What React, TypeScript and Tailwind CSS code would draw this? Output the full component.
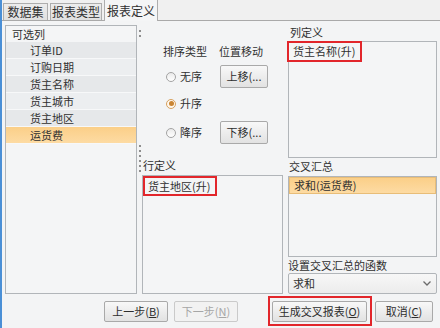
import React from 'react';

const fields = ['订单ID', '订购日期', '货主名称', '货主城市', '货主地区', '运货费'];

const Radio = ({ label, checked }: { label: string; checked?: boolean }) => (
  <div className="flex items-center gap-[4px] pl-[3px]">
    {checked ? (
      <span className="flex h-[10px] w-[10px] items-center justify-center rounded-full border border-[#d6a160] bg-[#fff7ec]">
        <span className="h-[5px] w-[5px] rounded-full bg-[#c98432]" />
      </span>
    ) : (
      <span className="h-[10px] w-[10px] rounded-full border border-[#a3a3a3] bg-linear-to-b from-[#eaeaea] to-white" />
    )}
    <span>{label}</span>
  </div>
);

const Btn = (props: { children: React.ReactNode; className?: string; disabled?: boolean }) => (
  <button
    className={
      'flex h-[21px] items-center justify-center whitespace-nowrap rounded-[2px] border leading-none ' +
      (props.disabled
        ? 'border-[#cacaca] bg-[#f2f2f2] text-[#a6a6a6] '
        : 'border-[#a9a9a9] bg-linear-to-b from-[#f8f8f8] to-[#e2e2e2] text-[#2d2d2d] ') +
      (props.className ?? '')
    }
  >
    {props.children}
  </button>
);

const Dots = ({ count }: { count: number }) => (
  <div className="flex flex-col gap-[3px] pl-[2px]">
    {Array.from({ length: count }).map((_, i) => (
      <span key={i} className="h-[2px] w-[2px] bg-[#8e8e8e]" />
    ))}
  </div>
);

export default function App() {
  return (
    <div className="flex h-[328px] w-[440px] flex-col overflow-hidden border-l-2 border-[#4a8fd6] bg-[#f0f0f0] font-['Microsoft_YaHei','Noto_Sans_CJK_SC','Liberation_Sans',sans-serif] text-[11px] text-[#303030]">
      {/* tabs */}
      <div className="flex h-[21px] shrink-0 items-end border-b border-[#a9a9a9] pl-[1px]">
        <div className="mr-[2px] h-[17px] w-[45px] border border-b-0 border-[#adadad] bg-linear-to-b from-[#ececec] to-[#e0e0e0] text-center text-[12px] leading-[16px]">
          数据集
        </div>
        <div className="mr-[2px] h-[17px] w-[52px] border border-b-0 border-[#adadad] bg-linear-to-b from-[#ececec] to-[#e0e0e0] text-center text-[12px] leading-[16px]">
          报表类型
        </div>
        <div className="-mb-px h-[22px] w-[54px] border border-b-0 border-[#adadad] bg-[#f4f5f6] pt-[3px] text-center text-[12px] leading-[16px]">
          报表定义
        </div>
      </div>

      {/* panel */}
      <div className="flex flex-1 flex-col bg-[#f3f4f5]">
        <div className="flex h-[273px] pl-[3px] pt-[4px]">
          {/* available columns */}
          <div className="h-[269px] w-[132px] border border-[#b1b5b9] bg-[#f4f5f6]">
            <div className="h-[16px] pl-[6px] leading-[16px]">可选列</div>
            {fields.map((f, i) => (
              <div
                key={f}
                className={
                  'h-[17px] border-b border-[#f7f8f9] pl-[24px] leading-[16px] ' +
                  (f === '运货费'
                    ? 'bg-linear-to-b from-[#fbcf88] to-[#fddba3]'
                    : i % 2 === 0
                      ? 'bg-[#e6e8ea]'
                      : 'bg-[#eceef0]')
                }
              >
                {f}
              </div>
            ))}
          </div>

          {/* splitter grip */}
          <div className="flex w-[5px] flex-col justify-between pb-[122px] pt-[5px]">
            <Dots count={2} />
            <Dots count={6} />
          </div>

          {/* middle column */}
          <div className="flex w-[141px] flex-col">
            <div className="h-[133px] pl-[21px] pt-[19px]">
              <div className="flex h-[15px] items-center leading-none">
                <span className="w-[56px]">排序类型</span>
                <span>位置移动</span>
              </div>
              <div className="mt-[6px] flex h-[23px] items-center">
                <div className="w-[57px]">
                  <Radio label="无序" />
                </div>
                <Btn className="h-[23px] w-[48px]">上移(...</Btn>
              </div>
              <div className="mt-[4px] flex h-[23px] items-center">
                <Radio label="升序" checked />
              </div>
              <div className="mt-[6px] flex h-[23px] items-center">
                <div className="w-[57px]">
                  <Radio label="降序" />
                </div>
                <Btn className="h-[23px] w-[48px]">下移(...</Btn>
              </div>
            </div>
            <div className="h-[17px] pl-[1px] leading-[14px]">行定义</div>
            <div className="h-[119px] border border-[#b1b5b9] bg-[#f4f5f6]">
              <div className="h-[20px] w-[74px] whitespace-nowrap border-2 border-[#e2262b] pl-[3px] leading-[16px]">
                货主地区(升)
              </div>
            </div>
          </div>

          {/* right column */}
          <div className="ml-[5px] flex w-[149px] flex-col">
            <div className="h-[16px] pl-[2px] leading-[15px]">列定义</div>
            <div className="h-[117px] border border-[#b1b5b9] bg-[#f4f5f6]">
              <div className="-ml-[2px] -mt-[1px] h-[21px] w-[75px] whitespace-nowrap border-2 border-[#e2262b] pl-[4px] leading-[17px]">
                货主名称(升)
              </div>
            </div>
            <div className="h-[18px] pl-[1px] leading-[17px]">交叉汇总</div>
            <div className="h-[81px] border border-[#b1b5b9] bg-[#f4f5f6]">
              <div className="h-[17px] border border-[#e8bd78] bg-linear-to-b from-[#fbcf88] to-[#fddba3] pl-[4px] leading-[15px]">
                求和(运货费)
              </div>
            </div>
            <div className="h-[16px] whitespace-nowrap leading-[16px]">设置交叉汇总的函数</div>
            <div className="flex h-[21px] items-center justify-between rounded-[2px] border border-[#b1b5b9] bg-linear-to-b from-[#f7f7f7] to-[#ececec] pl-[4px] pr-[5px]">
              <span>求和</span>
              <svg width="8" height="5" viewBox="0 0 8 5">
                <path d="M0.5 0.5 L4 4 L7.5 0.5" fill="none" stroke="#6b6b6b" strokeWidth="1.3" />
              </svg>
            </div>
          </div>
        </div>

        {/* footer buttons */}
        <div className="flex flex-1 items-center">
          <Btn className="ml-[102px] w-[64px]">
            上一步(<span className="underline">B</span>)
          </Btn>
          <Btn className="ml-[6px] w-[64px]" disabled>
            下一步(<span className="underline">N</span>)
          </Btn>
          <div className="ml-[30px] flex h-[30px] w-[104px] items-center border-2 border-[#e2262b] pl-[2px]">
            <Btn className="w-[95px]">
              生成交叉报表(<span className="underline">O</span>)
            </Btn>
          </div>
          <Btn className="ml-[3px] w-[58px]">
            取消(<span className="underline">C</span>)
          </Btn>
        </div>
      </div>
    </div>
  );
}
